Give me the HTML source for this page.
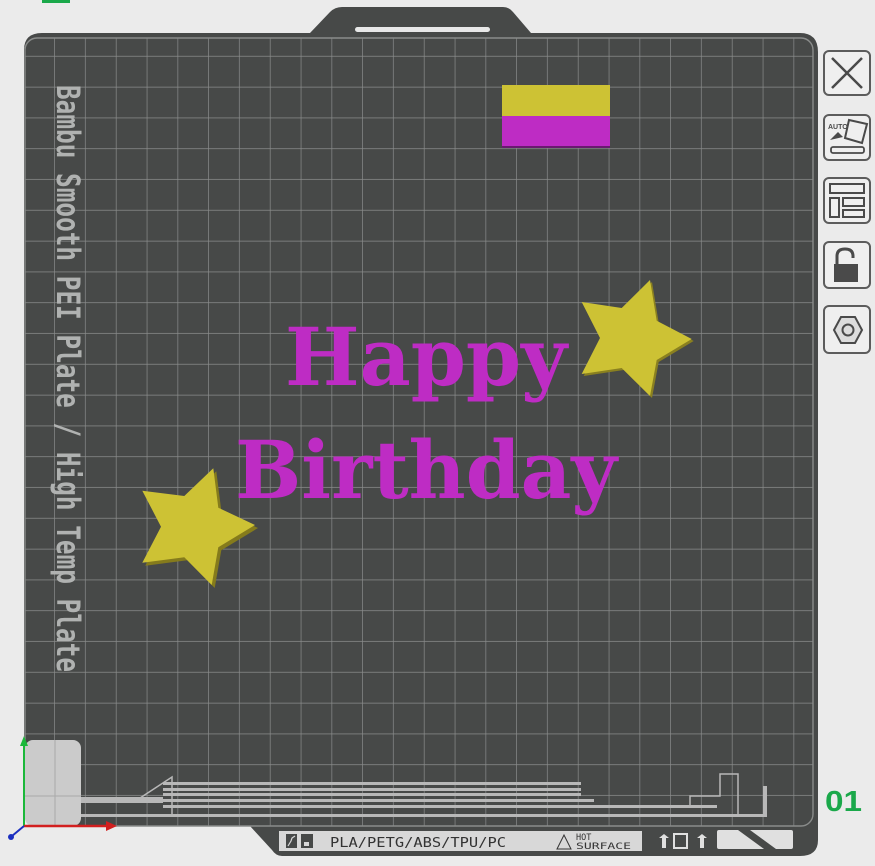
<!DOCTYPE html>
<html><head><meta charset="utf-8"><style>
html,body{margin:0;padding:0;background:#ebebeb;width:875px;height:866px;overflow:hidden}
svg{display:block}
</style></head><body>
<svg width="875" height="866" viewBox="0 0 875 866" xmlns="http://www.w3.org/2000/svg">
<defs>
<pattern id="g" x="24.2" y="25.9" width="30.8" height="30.8" patternUnits="userSpaceOnUse">
<path d="M30.8 0V30.8M0 30.8H30.8" stroke="#8a8c8b" stroke-width="1.4" fill="none"/>
</pattern>
<clipPath id="gc"><rect x="25" y="38" width="788" height="788" rx="12"/></clipPath>
</defs>
<rect x="42" y="0" width="28" height="3" fill="#1aa84a"/>
<path d="M310 33 L330 12 Q335 7 342 7 L503 7 Q509 7 513 12 L531 33 L800 33 Q818 33 818 52 L818 840 Q818 856 800 856 L282 856 Q276 856 272 850 L250 826 L40 826 Q24 826 24 810 L24 50 Q24 33 42 33 Z" fill="#474948"/>
<rect x="355" y="27" width="135" height="5" rx="2.5" fill="#e8e8e8"/>
<g clip-path="url(#gc)">
<rect x="25" y="38" width="788" height="788" fill="#474948"/>
<rect x="25" y="38" width="788" height="788" fill="url(#g)"/>
</g>
<rect x="25" y="38" width="788" height="788" rx="12" fill="none" stroke="#8a8c8b" stroke-width="1.4"/>
<text transform="translate(57,85) rotate(90)" font-family="'DejaVu Sans Mono','Liberation Mono',monospace" font-weight="bold" font-size="32" fill="#b0b2b1" textLength="587" lengthAdjust="spacingAndGlyphs">Bambu Smooth PEI Plate / High Temp Plate</text>
<rect x="502" y="85" width="108" height="31" fill="#cdc234"/>
<rect x="502" y="116" width="108" height="31" fill="#be2cc4"/>
<rect x="502" y="146" width="108" height="2" fill="#6a1a70"/>
<polygon transform="translate(2,2)" points="650,280 621.7,308 581.7,302 600,338 581.7,374 621.7,368 650,396 656.7,360 691.7,339 656.7,320.7" fill="#8a8020"/>
<polygon points="650,280 621.7,308 581.7,302 600,338 581.7,374 621.7,368 650,396 656.7,360 691.7,339 656.7,320.7" fill="#cdc234"/>
<polygon transform="translate(3,3)" points="213.3,468.3 184.3,496 142.3,490.7 161,526.7 142.3,562.7 184.3,557.3 211.7,585 218.3,547.3 255,525 218.3,507.7" fill="#857b1c"/>
<polygon points="213.3,468.3 184.3,496 142.3,490.7 161,526.7 142.3,562.7 184.3,557.3 211.7,585 218.3,547.3 255,525 218.3,507.7" fill="#cdc234"/>
<text x="285" y="385" font-family="'DejaVu Serif','Liberation Serif',serif" font-weight="bold" font-size="80" fill="#be2cc4" textLength="282" lengthAdjust="spacingAndGlyphs">Happy</text>
<text x="235" y="498" font-family="'DejaVu Serif','Liberation Serif',serif" font-weight="bold" font-size="80" fill="#be2cc4" textLength="382" lengthAdjust="spacingAndGlyphs">Birthday</text>
<rect x="25" y="740" width="56" height="86" rx="8" fill="#cbcbcb"/>
<line x1="55" y1="740" x2="55" y2="826" stroke="#aaa" stroke-width="1"/>
<line x1="25" y1="796" x2="81" y2="796" stroke="#aaa" stroke-width="1"/>
<g fill="#b8b8b8">
<rect x="163" y="782" width="418" height="3"/>
<rect x="163" y="788" width="418" height="3"/>
<rect x="163" y="793" width="418" height="3"/>
<rect x="163" y="799" width="431" height="3"/>
<rect x="163" y="805" width="554" height="3"/>
<rect x="81" y="797" width="82" height="6"/>
<rect x="81" y="814" width="684" height="3"/>
<rect x="763" y="786" width="4" height="31"/>
</g>
<path d="M137 800 L172 777 L172 816" stroke="#b8b8b8" stroke-width="1.5" fill="none"/>
<path d="M690 807 L690 796 L720 796 L720 774 L738 774 L738 815" stroke="#b8b8b8" stroke-width="1.5" fill="none"/>
<line x1="24" y1="826" x2="24" y2="740" stroke="#1bb83a" stroke-width="2"/>
<polygon points="24,736 20,746 28,746" fill="#1bb83a"/>
<line x1="24" y1="826" x2="108" y2="826" stroke="#d21f1f" stroke-width="2.5"/>
<polygon points="117,826 106,821 106,831" fill="#d21f1f"/>
<line x1="24" y1="826" x2="12" y2="836" stroke="#1b2fc0" stroke-width="2"/>
<circle cx="11" cy="837" r="3" fill="#1b2fc0"/>
<rect x="279" y="831" width="363" height="20" fill="#d8d8d8"/>
<rect x="286" y="834" width="11" height="14" fill="#474948"/>
<path d="M288 846 L291 841 L292 838 L295 836" stroke="#d8d8d8" stroke-width="1.2" fill="none"/>
<rect x="301" y="834" width="12" height="14" fill="#474948"/>
<rect x="304" y="842" width="5" height="4" fill="#d8d8d8"/>
<text x="330" y="847" font-family="'DejaVu Sans Mono','Liberation Mono',monospace" font-size="13" fill="#333" textLength="176" lengthAdjust="spacingAndGlyphs">PLA/PETG/ABS/TPU/PC</text>
<path d="M557 849 L564 835 L571 849 Z" stroke="#333" stroke-width="1" fill="none"/>
<text x="576" y="840" font-family="'DejaVu Sans Mono',monospace" font-size="8.5" fill="#333">HOT</text>
<text x="576" y="849" font-family="'DejaVu Sans Mono',monospace" font-size="8.5" fill="#333" textLength="55" lengthAdjust="spacingAndGlyphs">SURFACE</text>
<g fill="#e0e0e0">
<path d="M664 834 L669 838 L666 838 L666 848 L662 848 L662 838 L659 838 Z"/>
<rect x="674" y="834" width="13" height="14" fill="none" stroke="#e0e0e0" stroke-width="2"/>
<path d="M702 834 L707 838 L704 838 L704 848 L700 848 L700 838 L697 838 Z"/>
<rect x="717" y="830" width="76" height="19" rx="2"/>
</g>
<polygon points="738,830 750,830 776,849 764,849" fill="#474948"/>
<text x="825" y="811" font-family="'Liberation Sans',sans-serif" font-weight="bold" font-size="29" fill="#1aa84a" textLength="37" lengthAdjust="spacingAndGlyphs">01</text>
<g fill="#efefef" stroke="#5c5c5c" stroke-width="2">
<rect x="824" y="51" width="46" height="44" rx="5"/>
<rect x="824" y="115" width="46" height="45" rx="5"/>
<rect x="824" y="178" width="46" height="45" rx="5"/>
<rect x="824" y="242" width="46" height="46" rx="5"/>
<rect x="824" y="306" width="46" height="47" rx="5"/>
</g>
<path d="M832 58 L862 88 M862 58 L832 88" stroke="#4a4a4a" stroke-width="2.5"/>
<text x="828" y="129" font-family="'Liberation Sans',sans-serif" font-weight="bold" font-size="7" fill="#4a4a4a">AUTO</text>
<path d="M849 120 L867 124 L862 143 L845 138 Z" fill="none" stroke="#4a4a4a" stroke-width="2"/>
<path d="M830 140 L838 132 L843 137 Z" fill="#4a4a4a"/>
<rect x="831" y="147" width="33" height="6" rx="2" fill="none" stroke="#4a4a4a" stroke-width="1.8"/>
<g fill="none" stroke="#4a4a4a" stroke-width="2">
<rect x="830" y="184" width="34" height="9"/>
<rect x="830" y="198" width="9" height="19"/>
<rect x="843" y="198" width="21" height="8"/>
<rect x="843" y="210" width="21" height="7"/>
</g>
<path d="M837 266 L837 256 Q837 249 845 249 Q853 249 853 256 L853 258" fill="none" stroke="#4a4a4a" stroke-width="3"/>
<rect x="834" y="264" width="24" height="18" fill="#4a4a4a"/>
<path d="M834 330 L841 317 L855 317 L862 330 L855 343 L841 343 Z" fill="#dcdcdc" stroke="#4a4a4a" stroke-width="2"/>
<circle cx="848" cy="330" r="5.5" fill="none" stroke="#4a4a4a" stroke-width="2"/>
</svg>
</body></html>
